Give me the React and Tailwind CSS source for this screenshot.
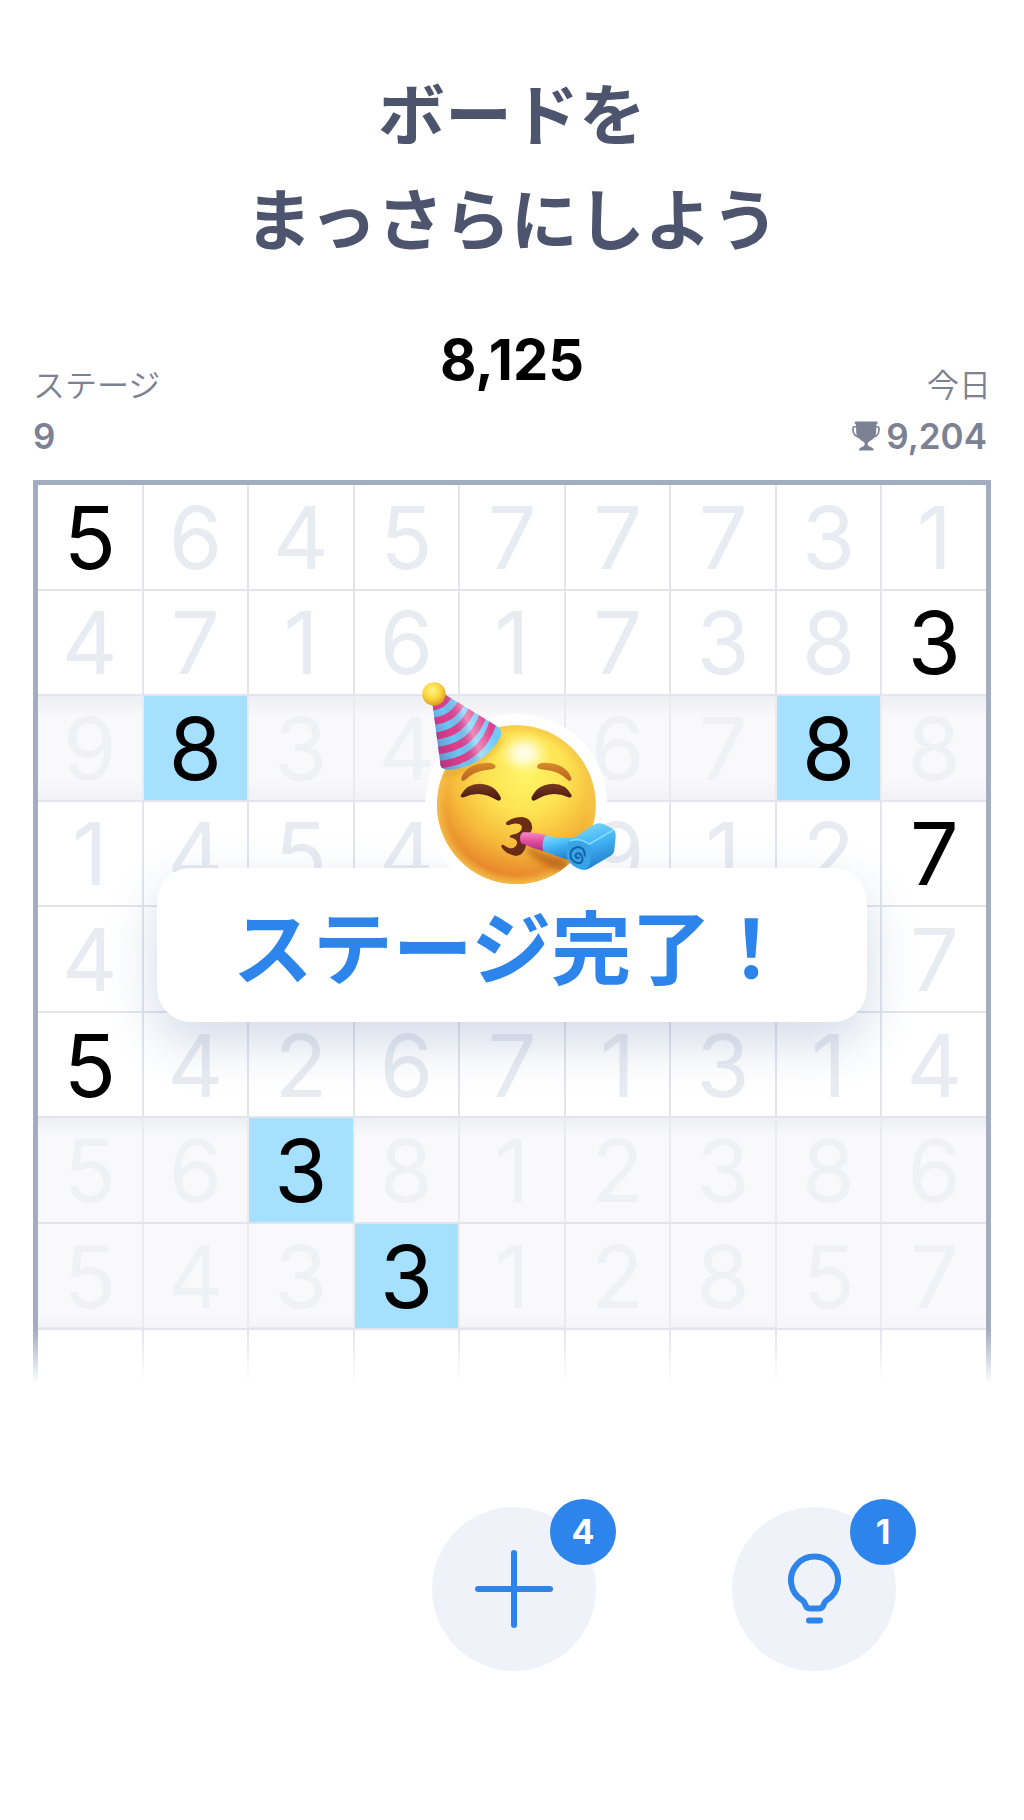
import React, { useState } from 'react';

const ROWS = [
  { digits: '564577731', open: [0] },
  { digits: '471617383', open: [8] },
  { digits: '9834 6788', matched: [1, 7], shade: 'both' },
  { digits: '1454 9127', open: [8] },
  { digits: '4       7' },
  { digits: '542671314', open: [0] },
  { digits: '563812386', matched: [2], shade: 'top' },
  { digits: '543312857', matched: [3], shade: 'bottom' },
];

const SHADES = {
  both: 'bg-[linear-gradient(to_bottom,#eeeff3_0,#f9f9fc_22px,#f9f9fc_82px,#f2f2f6_100%)]',
  top: 'bg-[linear-gradient(to_bottom,#eeeff3_0,#f9f9fc_20px)]',
  bottom: 'bg-[linear-gradient(to_bottom,#f9f9fc_85%,#f5f5f9_100%)]',
};

function Cell({ value, open, matched, shade }) {
  let look = 'bg-white text-[#e8ebf1]';
  if (matched) look = 'bg-[#a6e0ff] text-black';
  else if (open) look = 'bg-white text-black';
  else if (shade) look = `${SHADES[shade]} text-[#f0f1f5]`;

  return (
    <button type="button" className={`flex aspect-square items-center justify-center pt-[2px] text-[86px] leading-none ${look}`}>
      {value.trim()}
    </button>
  );
}

function Board() {
  return (
    <div className="border-x-[5px] border-t-[5px] border-[#a3adc2] [mask-image:linear-gradient(to_bottom,black_calc(100%-60px),transparent_calc(100%-6px))]">
      <div className="flex flex-col gap-[2px] bg-[#e2e5ec]">
        {ROWS.map((row, y) => (
          <div key={y} className={`grid grid-cols-9 gap-[2px] ${row.shade ? 'bg-[#eaebf0]' : ''}`}>
            {row.digits.split('').map((digit, x) => (
              <Cell
                key={x}
                value={digit}
                open={row.open?.includes(x)}
                matched={row.matched?.includes(x)}
                shade={row.shade}
              />
            ))}
          </div>
        ))}
        {/* Next empty row, fades out */}
        <div className="grid h-[60px] grid-cols-9 gap-[2px]">
          {Array.from({ length: 9 }, (_, x) => (
            <div key={x} className="bg-white"></div>
          ))}
        </div>
      </div>
    </div>
  );
}

function Trophy() {
  return (
    <svg className="h-[30px] w-7" viewBox="0 0 85 90" aria-hidden="true">
      <path
        fill="#7c8193"
        d="M12 1H74Q78 1 78 5Q78 9 74 10L73 36C71 50 60 58 50 63Q46 66 48 72Q51 77 59 79Q66 82 66 89H21Q21 82 28 79Q36 77 38 72Q40 66 36 63C26 58 15 50 13 36L12 10Q8 9 8 5Q8 1 12 1Z"
      />
      <path
        fill="none"
        stroke="#7c8193"
        strokeWidth="5"
        d="M15 17H8Q2 17 3 27Q4 47 25 49M71 17H77Q83 17 82 27Q81 47 61 49"
      />
    </svg>
  );
}

function PartyFace() {
  return (
    <svg className="h-[230px] w-[240px]" viewBox="0 0 720 690" aria-hidden="true">
      <defs>
        <radialGradient id="skin" cx="0.56" cy="0.3" r="0.72">
          <stop offset="0" stopColor="#fff568" />
          <stop offset="0.35" stopColor="#fde352" />
          <stop offset="0.65" stopColor="#f6ba3a" />
          <stop offset="0.9" stopColor="#e8892c" />
          <stop offset="1" stopColor="#e58a2c" />
        </radialGradient>
        <radialGradient id="rim" cx="0.5" cy="0.5" r="0.5">
          <stop offset="0.88" stopColor="#f6c84a" stopOpacity="0" />
          <stop offset="1" stopColor="#f6c84a" stopOpacity="0.8" />
        </radialGradient>
        <radialGradient id="shine">
          <stop offset="0" stopColor="#fffff4" />
          <stop offset="0.4" stopColor="#fffde0" stopOpacity="0.8" />
          <stop offset="1" stopColor="#fff77a" stopOpacity="0" />
        </radialGradient>
        <radialGradient id="pompom" cx="0.42" cy="0.35" r="0.65">
          <stop offset="0" stopColor="#fff58a" />
          <stop offset="0.55" stopColor="#fcd63e" />
          <stop offset="1" stopColor="#e09a28" />
        </radialGradient>
        <linearGradient id="coneLight" x1="0" y1="0.6" x2="1" y2="0.2">
          <stop offset="0" stopColor="#5a1a6a" stopOpacity="0.4" />
          <stop offset="0.3" stopColor="#5a1a6a" stopOpacity="0" />
          <stop offset="0.52" stopColor="#fff" stopOpacity="0.4" />
          <stop offset="0.75" stopColor="#fff" stopOpacity="0" />
          <stop offset="1" stopColor="#40206a" stopOpacity="0.2" />
        </linearGradient>
        <linearGradient id="brow" x1="0" y1="0" x2="0" y2="1">
          <stop offset="0" stopColor="#d98a2b" />
          <stop offset="1" stopColor="#b8651c" />
        </linearGradient>
        <linearGradient id="eye" x1="0" y1="0" x2="0" y2="1">
          <stop offset="0" stopColor="#7a3a20" />
          <stop offset="1" stopColor="#451710" />
        </linearGradient>
        <linearGradient id="pink" x1="0" y1="0" x2="0" y2="1">
          <stop offset="0" stopColor="#f68cc8" />
          <stop offset="0.5" stopColor="#e0489c" />
          <stop offset="1" stopColor="#a82f7c" />
        </linearGradient>
        <linearGradient id="roll" x1="0" y1="0" x2="0.3" y2="1">
          <stop offset="0" stopColor="#8be0ff" />
          <stop offset="0.5" stopColor="#45b7f5" />
          <stop offset="1" stopColor="#2384d2" />
        </linearGradient>
        <filter id="soft" x="-30%" y="-30%" width="160%" height="160%">
          <feGaussianBlur stdDeviation="10" />
        </filter>
        <clipPath id="face">
          <circle cx="349" cy="404" r="238" />
        </clipPath>
        <clipPath id="cone">
          <path d="M97 98L122 288Q128 304 170 297Q260 278 302 200Q308 186 296 172L136 74Z" />
        </clipPath>
      </defs>

      <circle cx="349" cy="404" r="273" fill="#fff" />
      <circle cx="349" cy="404" r="238" fill="url(#skin)" />
      <circle cx="349" cy="404" r="238" fill="url(#rim)" />
      <ellipse cx="372" cy="250" rx="84" ry="66" fill="url(#shine)" />
      <g clipPath="url(#face)">
        <path d="M380 525Q440 560 510 570L500 610Q430 590 380 545Z" fill="#a0460f" opacity="0.55" filter="url(#soft)" />
        <path d="M125 310Q230 310 305 205" fill="none" stroke="#d98a20" strokeWidth="14" opacity="0.5" filter="url(#soft)" />
      </g>

      {/* Brows and closed eyes */}
      <path d="M184 323Q200 281 262 278Q284 278 287 289Q286 299 266 299Q224 301 192 332Q183 334 184 323Z" fill="url(#brow)" />
      <path d="M514 323Q498 281 436 278Q413 278 411 289Q412 299 432 299Q475 301 506 332Q515 334 514 323Z" fill="url(#brow)" />
      <path d="M182 376Q200 341 240 341Q287 344 303 384Q302 396 290 390Q240 358 192 382Q181 385 182 376Z" fill="url(#eye)" />
      <path d="M515 376Q498 341 458 341Q410 344 394 384Q395 396 407 390Q456 358 505 382Q516 385 515 376Z" fill="url(#eye)" />
      <path
        d="M318 458Q336 441 367 441Q396 445 397 473Q394 491 373 500Q383 514 376 534Q369 556 347 558Q316 552 304 530Q303 523 311 525Q331 541 345 531Q363 511 330 502Q327 497 336 494Q369 490 365 467Q352 455 325 466Q316 466 318 458Z"
        fill="#6b2c17"
      />

      {/* Party hat */}
      <g clipPath="url(#cone)">
        <rect x="80" y="60" width="240" height="250" fill="#6cc8f6" />
        <g fill="none" stroke="#df3f8d" strokeWidth="22">
          <path d="M90 112Q134 108 148 70" />
          <path d="M92 154Q160 152 188 90" />
          <path d="M96 199Q188 194 220 108" />
          <path d="M102 243Q222 234 252 126" />
          <path d="M106 285Q250 276 282 146" />
        </g>
        <rect x="80" y="60" width="240" height="250" fill="url(#coneLight)" />
      </g>
      <circle cx="102" cy="72" r="35" fill="url(#pompom)" />

      {/* Blower */}
      <path d="M368 487Q400 485 442 496L436 545Q400 537 363 519Q355 500 368 487Z" fill="url(#pink)" />
      <path d="M436 496Q480 507 520 503L514 572Q470 560 430 543Q423 520 436 496Z" fill="url(#roll)" />
      <path d="M505 515L580 465Q595 456 612 463L638 476Q648 482 647 500L643 540Q642 551 632 557L566 596Q550 604 530 590L508 568Q495 540 505 515Z" fill="url(#roll)" />
      <path d="M508 513Q525 498 566 520Q580 530 574 560Q568 602 545 599Q500 585 499 548Q499 525 508 513Z" fill="#38a4e8" />
      <path d="M510 513Q535 501 568 522L640 480" fill="none" stroke="#93e2ff" strokeWidth="5" opacity="0.8" />
      <path
        d="M554 557Q556 532 532 531Q508 537 512 562Q521 582 543 578Q553 567 541 552Q530 546 526 557Q529 567 537 563"
        fill="none"
        stroke="#1661a5"
        strokeWidth="6"
        strokeLinecap="round"
      />
    </svg>
  );
}

function ActionButton({ label, count, onClick, children }) {
  return (
    <button
      type="button"
      aria-label={label}
      onClick={onClick}
      className="relative flex size-[164px] items-center justify-center rounded-full bg-[#eff3f9] text-[#2d85eb]"
    >
      {children}
      <span className="absolute -right-5 -top-2 flex size-[66px] items-center justify-center rounded-full bg-[#2d85eb] text-[34px] font-bold leading-none text-white">
        {count}
      </span>
    </button>
  );
}

export default function App() {
  const [adds, setAdds] = useState(4);
  const [hints, setHints] = useState(1);

  return (
    <main className="bg-white pb-[148px] font-['Inter','Noto_Sans_CJK_JP',sans-serif]">
      <h1 className="pt-[58px] text-center font-['Noto_Sans_CJK_JP',sans-serif] text-[67px] font-bold leading-[105px] text-[#4d546e]">
        ボードを<br />まっさらにしよう
      </h1>

      {/* Score */}
      <section className="mt-16 grid grid-cols-3 px-[33px] pb-6 text-[#7c8193]">
        <div className="pt-8">
          <div className="font-['Noto_Sans_CJK_JP',sans-serif] text-[32px] font-[350] leading-[38px]">ステージ</div>
          <div className="mt-[14px] text-[35px] font-semibold leading-10">9</div>
        </div>
        <div className="text-center text-[56px] font-bold leading-[56px] text-black">8,125</div>
        <div className="pt-8 text-right">
          <div className="font-['Noto_Sans_CJK_JP',sans-serif] text-[32px] font-[350] leading-[38px]">今日</div>
          <div className="mt-[14px] flex items-center justify-end gap-[6px] pr-1 text-[35px] font-semibold leading-10">
            <Trophy />
            9,204
          </div>
        </div>
      </section>

      <section className="relative px-[33px]">
        <Board />

        {/* Stage complete */}
        <div className="absolute inset-x-[157px] top-[388px] flex h-[154px] items-center justify-center rounded-[34px] bg-white pb-1 shadow-[0_20px_50px_rgba(70,100,160,0.24)]">
          <p className="font-['Noto_Sans_CJK_JP',sans-serif] text-[80px] font-bold leading-none text-[#2d85eb]">ステージ完了！</p>
        </div>
        <div className="absolute inset-x-0 top-[190px] flex justify-center pl-4">
          <PartyFace />
        </div>
      </section>

      <div className="mt-[117px] grid grid-cols-3 justify-items-center pl-16 pr-[60px]">
        <div className="col-start-2">
          <ActionButton label="数字を追加" count={adds} onClick={() => setAdds(Math.max(0, adds - 1))}>
            <svg className="size-[78px]" viewBox="0 0 78 78" fill="none" stroke="currentColor" strokeWidth="6" strokeLinecap="round">
              <path d="M39 3V75M3 39H75" />
            </svg>
          </ActionButton>
        </div>
        <div>
          <ActionButton label="ヒント" count={hints} onClick={() => setHints(Math.max(0, hints - 1))}>
            <svg className="h-[71px] w-[53px]" viewBox="0 0 53 71" fill="none" stroke="currentColor" strokeWidth="6" strokeLinecap="round">
              <path d="M22 55.500H31Q34.500 55.500 35.500 52Q36.500 48.500 39 47A23.500 23.500 0 1 0 14 47Q16.500 48.500 17.500 52Q18.500 55.500 22 55.500Z" strokeLinejoin="round" />
              <path d="M21 67.500H32" />
            </svg>
          </ActionButton>
        </div>
      </div>
    </main>
  );
}
